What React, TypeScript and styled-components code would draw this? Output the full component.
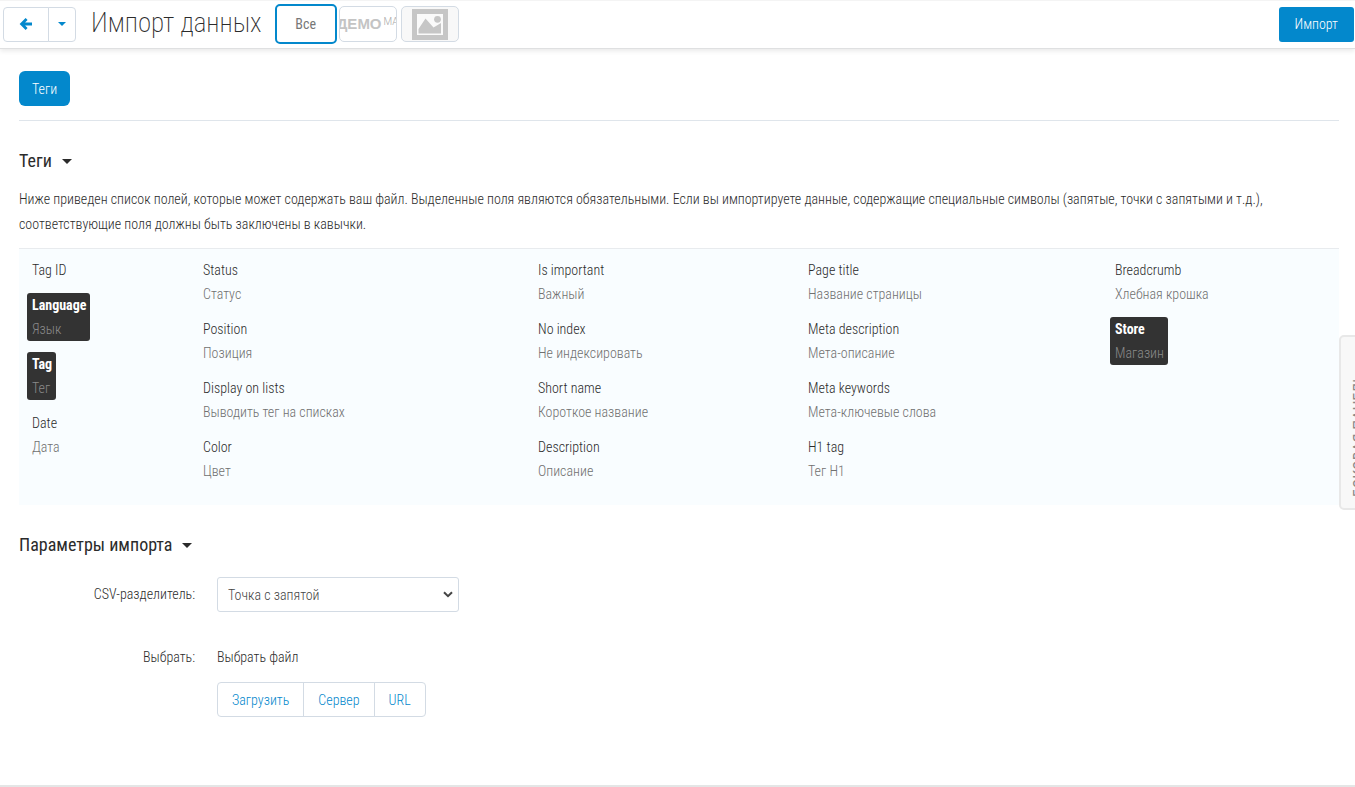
import React from "react";
import styled, { createGlobalStyle, css } from "styled-components";

const blue = "#0388cc";
const line = "#d3dbe4";

const GlobalStyle = createGlobalStyle`
  *, *::before, *::after { box-sizing: border-box; }
  body {
    margin: 0;
    background: #fff;
    color: #2b2b2b;
    font: 300 14px/24px "Roboto Condensed", Roboto, "Liberation Sans", sans-serif;
    overflow-x: hidden;
  }
  button, select { font: inherit; margin: 0; }
  button { cursor: pointer; }
  h1, h2, p, dl, dt, dd { margin: 0; }
`;

const Page = styled.div`
  display: flex;
  flex-direction: column;
  min-height: 100vh;
  border-bottom: 2px solid #e4e6e6;
`;

const Header = styled.header`
  display: flex;
  align-items: center;
  height: 49px;
  padding: 0 1px 1px 3px;
  border-top: 1px solid #f4f4f4;
  border-bottom: 1px solid #dfe0e1;
  box-shadow: 0 2px 5px rgba(0, 0, 0, 0.09);
`;

const ButtonGroup = styled.div`
  display: inline-flex;
  height: 35px;
`;

const GroupButton = styled.button<{ $pad?: number }>`
  display: inline-flex;
  align-items: center;
  justify-content: center;
  padding: 0 ${(p) => p.$pad ?? 14}px;
  border: 1px solid ${line};
  background: #fff;
  color: ${blue};
  & + & { margin-left: -1px; }
  &:first-child { border-radius: 4px 0 0 4px; }
  &:last-child { border-radius: 0 4px 4px 0; }
`;

const Title = styled.h1`
  margin: 0 13px 3px 15px;
  font-size: 27px;
  line-height: 36px;
  font-weight: 200;
`;

const Stores = styled.div`
  display: flex;
  align-items: center;
  gap: 4px;
`;

const StoreButton = styled.button<{ $active?: boolean; $tint?: boolean }>`
  display: flex;
  align-items: center;
  justify-content: center;
  width: 58px;
  height: 36px;
  padding: 0;
  overflow: hidden;
  border: 1px solid ${line};
  border-radius: 5px;
  background: ${(p) => (p.$tint ? "#f8f8f8" : "#fff")};
  color: #777;
  ${(p) =>
    p.$active &&
    css`
      width: 62px;
      height: 40px;
      margin-right: -2px;
      border: 2px solid ${blue};
      font-weight: 400;
    `}
`;

const DemoLogo = styled.span`
  display: flex;
  align-items: center;
  color: #c4c4c4;
  font: 700 15px/20px "Liberation Sans", sans-serif;
  white-space: nowrap;
`;

const DemoSuffix = styled.span`
  margin-left: 2px;
  padding-bottom: 4px;
  font: 300 10px/16px Roboto, sans-serif;
  color: #a8a8a8;
`;

const PrimaryButton = styled.button<{ $wide?: boolean }>`
  height: 35px;
  padding: 0 ${(p) => (p.$wide ? 16 : 13)}px;
  border: 0;
  border-radius: ${(p) => (p.$wide ? 3 : 6)}px;
  background: ${blue};
  color: #fff;
  ${(p) => p.$wide && "margin-left: auto;"}
`;

const Content = styled.main`
  flex: 1;
  padding: 22px 16px 56px 19px;
`;

const TabBar = styled.nav`
  padding-bottom: 14px;
  border-bottom: 1px solid #dfe5eb;
`;

const SectionTitle = styled.h2`
  display: flex;
  align-items: center;
  gap: 10px;
  margin-top: 28px;
  font-size: 18px;
  line-height: 24px;
  font-weight: 400;
`;

const Note = styled.p`
  margin: 14px 0 11px;
  line-height: 25px;
`;

const Fields = styled.div`
  display: grid;
  grid-template-columns: 171fr 335fr 270fr 307fr 224fr;
  padding: 9px 0 22px 13px;
  border-top: 1px solid #e8ebee;
  background: #f9fdff;
`;

const Column = styled.dl`
  display: flex;
  flex-direction: column;
  align-items: flex-start;
  gap: 11px;
`;

const Field = styled.div<{ $required?: boolean }>`
  dd { color: #707070; }
  ${(p) =>
    p.$required &&
    css`
      margin-left: -5px;
      padding: 0 4px 0 5px;
      border-radius: 3px;
      background: #333;
      dt { color: #fff; font-weight: 700; }
      dd { color: #8a8a8a; }
    `}
`;

const Form = styled.form`
  display: grid;
  grid-template-columns: 176px 1fr;
  column-gap: 22px;
  row-gap: 33px;
  margin-top: 20px;
`;

const Label = styled.label`
  padding-top: 5px;
  text-align: right;
`;

const FileLabel = styled.span`
  text-align: right;
`;

const SelectWrap = styled.div`
  display: grid;
  align-items: center;
  width: 242px;
  svg {
    grid-area: 1 / 1;
    justify-self: end;
    margin-right: 6px;
    pointer-events: none;
  }
`;

const Select = styled.select`
  grid-area: 1 / 1;
  appearance: none;
  width: 100%;
  height: 35px;
  padding: 0 24px 0 10px;
  border: 1px solid ${line};
  border-radius: 3px;
  background: #fff;
  color: #444;
`;

const FilePicker = styled.div`
  display: flex;
  flex-direction: column;
  align-items: flex-start;
  gap: 13px;
`;

const SideTab = styled.button`
  position: fixed;
  top: 335px;
  right: -25px;
  display: flex;
  align-items: center;
  justify-content: space-between;
  writing-mode: vertical-rl;
  width: 41px;
  height: 175px;
  padding: 13px 0 11px;
  border: 2px solid #e8e8e8;
  border-radius: 5px;
  background: #f8f8f8;
  color: #8a8a8a;
`;

const SideLabel = styled.span`
  transform: rotate(180deg);
  font-size: 16px;
  line-height: 20px;
  font-weight: 400;
  text-transform: uppercase;
`;

const Caret = ({ size = 10 }: { size?: number }) => (
  <svg width={size} height={size / 2} viewBox="0 0 8 4" aria-hidden="true">
    <path d="M0 0h8L4 4z" fill="currentColor" />
  </svg>
);

type FieldData = [name: string, text?: string, required?: boolean];

const columns: FieldData[][] = [
  [["Tag ID"], ["Language", "Язык", true], ["Tag", "Тег", true], ["Date", "Дата"]],
  [["Status", "Статус"], ["Position", "Позиция"], ["Display on lists", "Выводить тег на списках"], ["Color", "Цвет"]],
  [["Is important", "Важный"], ["No index", "Не индексировать"], ["Short name", "Короткое название"], ["Description", "Описание"]],
  [["Page title", "Название страницы"], ["Meta description", "Мета-описание"], ["Meta keywords", "Мета-ключевые слова"], ["H1 tag", "Тег H1"]],
  [["Breadcrumb", "Хлебная крошка"], ["Store", "Магазин", true]],
];

export default function App() {
  return (
    <Page>
      <GlobalStyle />
      <Header>
        <ButtonGroup>
          <GroupButton type="button" $pad={15} aria-label="Назад">
            <svg width="14" height="12" viewBox="0 0 14 12" aria-hidden="true">
              <path d="M7.600 1 2.600 6l5 5M3 6h10" fill="none" stroke="currentColor" strokeWidth="2.800" />
            </svg>
          </GroupButton>
          <GroupButton type="button" $pad={9} aria-label="Меню">
            <Caret size={8} />
          </GroupButton>
        </ButtonGroup>
        <Title>Импорт данных</Title>
        <Stores>
          <StoreButton type="button" $active>Все</StoreButton>
          <StoreButton type="button">
            <DemoLogo>ДЕМО<DemoSuffix>МА</DemoSuffix></DemoLogo>
          </StoreButton>
          <StoreButton type="button" $tint aria-label="Магазин">
            <svg width="36" height="31" viewBox="0 0 36 31" aria-hidden="true">
              <path d="M0 0h36v31H0z" fill="#c6c6c6" />
              <path d="M5 5h26v21H5z" fill="#fafafa" />
              <path d="M6.500 24.500V20l7-10.500 8 9L29 14v10.500z" fill="#c6c6c6" />
              <circle cx="25.500" cy="10.300" r="3.400" fill="#c6c6c6" />
            </svg>
          </StoreButton>
        </Stores>
        <PrimaryButton type="submit" form="import-form" $wide>Импорт</PrimaryButton>
      </Header>

      <Content>
        <TabBar>
          <PrimaryButton type="button">Теги</PrimaryButton>
        </TabBar>

        <SectionTitle>Теги <Caret /></SectionTitle>
        <Note>
          Ниже приведен список полей, которые может содержать ваш файл. Выделенные поля являются обязательными. Если вы
          импортируете данные, содержащие специальные символы (запятые, точки с запятыми и т.д.), соответствующие поля
          должны быть заключены в кавычки.
        </Note>
        <Fields>
          {columns.map((fields, i) => (
            <Column key={i}>
              {fields.map(([name, text, required]) => (
                <Field key={name} $required={required}>
                  <dt>{name}</dt>
                  {text && <dd>{text}</dd>}
                </Field>
              ))}
            </Column>
          ))}
        </Fields>

        <SectionTitle>Параметры импорта <Caret /></SectionTitle>
        <Form id="import-form" onSubmit={(e) => e.preventDefault()}>
          <Label htmlFor="delimiter">CSV-разделитель:</Label>
          <SelectWrap>
            <Select id="delimiter">
              <option>Точка с запятой</option>
              <option>Запятая</option>
              <option>Табуляция</option>
            </Select>
            <svg width="10" height="7" viewBox="0 0 10 7" aria-hidden="true">
              <path d="M1 1.200l4 4 4-4" fill="none" stroke="#444" strokeWidth="2" />
            </svg>
          </SelectWrap>
          <FileLabel id="file-label">Выбрать:</FileLabel>
          <FilePicker>
            <span>Выбрать файл</span>
            <ButtonGroup role="group" aria-labelledby="file-label">
              <GroupButton type="button">Загрузить</GroupButton>
              <GroupButton type="button">Сервер</GroupButton>
              <GroupButton type="button">URL</GroupButton>
            </ButtonGroup>
          </FilePicker>
        </Form>
      </Content>

      <SideTab type="button">
        <svg width="12" height="9" viewBox="0 0 12 9" aria-hidden="true">
          <path d="M10 1 1 4.500 10 8" fill="none" stroke="currentColor" />
        </svg>
        <SideLabel>Боковая панель</SideLabel>
      </SideTab>
    </Page>
  );
}
